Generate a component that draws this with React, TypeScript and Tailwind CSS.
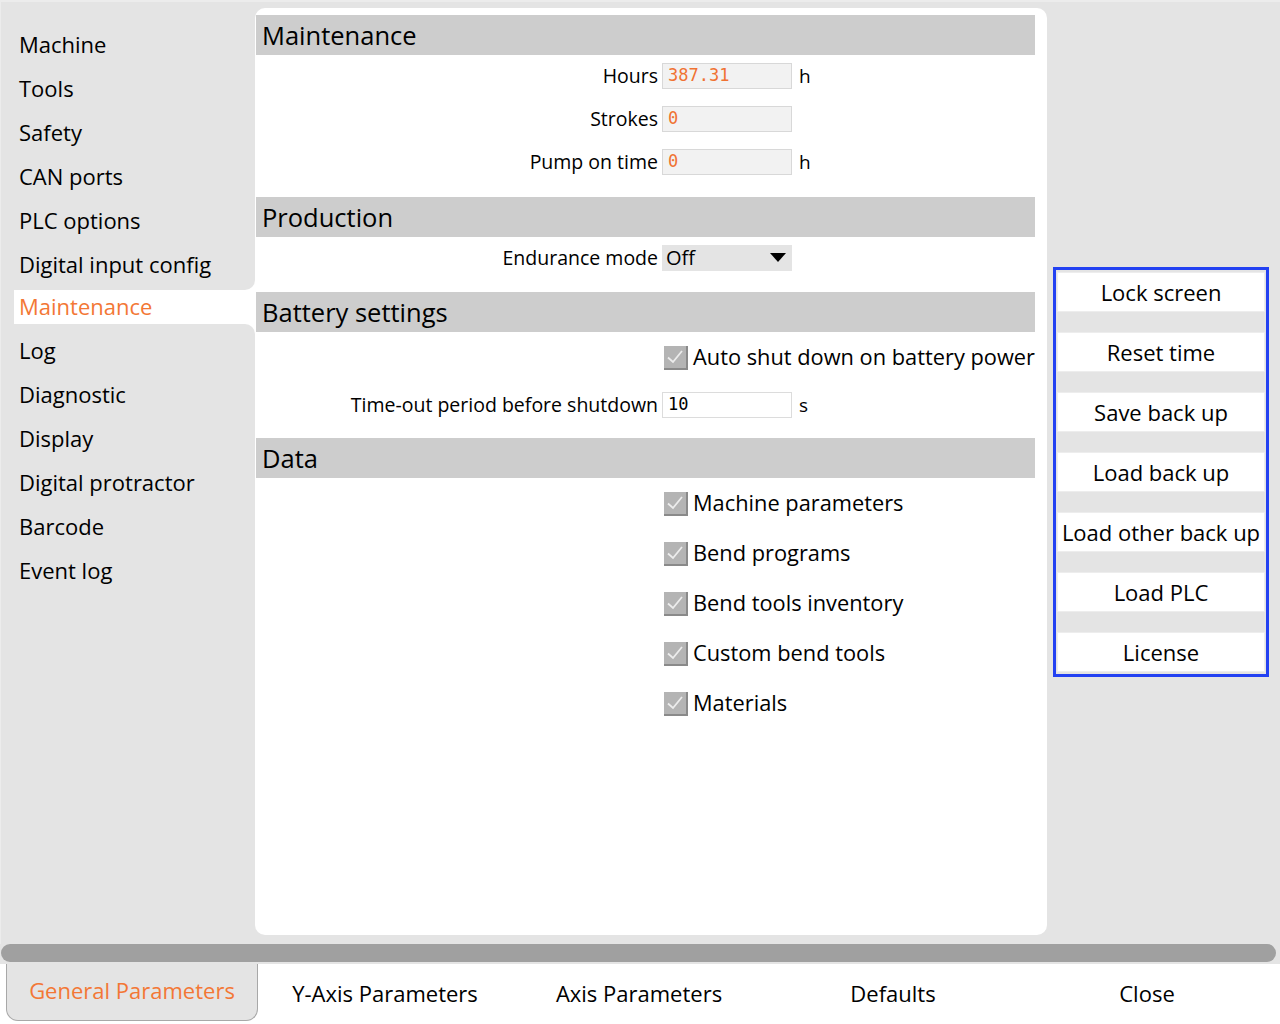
import React from 'react';

const FONT = "font-['Open_Sans',_sans-serif]";

const NAV_TOP = ['Machine', 'Tools', 'Safety', 'CAN ports', 'PLC options', 'Digital input config'];
const NAV_BOTTOM = ['Log', 'Diagnostic', 'Display', 'Digital protractor', 'Barcode', 'Event log'];
const ACTIONS = ['Lock screen', 'Reset time', 'Save back up', 'Load back up', 'Load other back up', 'Load PLC', 'License'];
const TABS = ['General Parameters', 'Y-Axis Parameters', 'Axis Parameters', 'Defaults', 'Close'];
const DATA_ITEMS = ['Machine parameters', 'Bend programs', 'Bend tools inventory', 'Custom bend tools', 'Materials'];

function SectionHeader({ title }: { title: string }) {
  return (
    <div className="ml-[1px] mr-[12px] h-[40px] bg-[#cdcdcd] pl-[6px] flex items-center text-[25.5px] text-black">
      {title}
    </div>
  );
}

function FieldRow({ label, value, unit, plain }: { label: string; value: string; unit?: string; plain?: boolean }) {
  return (
    <div className="flex items-center h-[26px]">
      <div className="w-[403px] text-right text-[19.5px] text-black leading-none whitespace-nowrap">{label}</div>
      <div
        className={`ml-[4px] w-[130px] h-[26px] border flex items-center pl-[5px] font-['DejaVu_Sans_Mono',_monospace] text-[17px] ${
          plain ? 'bg-white border-[#dcdcdc] text-black' : 'bg-[#f2f2f2] border-[#d8d8d8] text-[#f07232]'
        }`}
      >
        {value}
      </div>
      {unit && <div className="ml-[7px] text-[19px] text-black leading-none">{unit}</div>}
    </div>
  );
}

function Check({ label }: { label: string }) {
  return (
    <div className="flex items-center h-[24px]">
      <div className="w-[403px]" />
      <div className="ml-[6px] w-[24px] h-[24px] bg-[#b4b4b4] border-r-2 border-b-2 border-[#8a8a8a] flex items-center justify-center">
        <svg width="18" height="16" viewBox="0 0 18 16">
          <path d="M2 8.5 L7 13 L16 2" fill="none" stroke="#ececec" strokeWidth="1.8" />
        </svg>
      </div>
      <div className="ml-[5px] mb-[3px] text-[21.8px] text-black whitespace-nowrap leading-none">{label}</div>
    </div>
  );
}

export default function App() {
  return (
    <div className={`w-[1280px] h-[1024px] flex flex-col bg-[#e4e4e4] overflow-hidden ${FONT}`}>
      <div className="h-[944px] flex border-t-2 border-l border-[#ececec]">
        {/* sidebar */}
        <div className="w-[254px] flex flex-col bg-white">
          <div className="bg-[#e4e4e4] rounded-br-[10px] pt-[20px] pb-[4px]">
            {NAV_TOP.map((n) => (
              <div key={n} className="h-[44px] flex items-center pl-[18px] text-[22px] text-black whitespace-nowrap">
                {n}
              </div>
            ))}
          </div>
          <div className="h-[34px] flex">
            <div className="w-[13px] bg-[#e4e4e4]" />
            <div className="flex-1 bg-white flex items-center pl-[5px] pb-[1px] text-[22px] text-[#f37735]">Maintenance</div>
          </div>
          <div className="flex-1 bg-[#e4e4e4] rounded-tr-[10px] pt-[4px]">
            {NAV_BOTTOM.map((n) => (
              <div key={n} className="h-[44px] flex items-center pl-[18px] text-[22px] text-black whitespace-nowrap">
                {n}
              </div>
            ))}
          </div>
        </div>

        {/* content panel */}
        <div className="w-[792px] mt-[6px] mb-[9px] bg-white rounded-[10px] pt-[7px]">
          <SectionHeader title="Maintenance" />
          <div className="pt-[8px] pb-[22px] flex flex-col gap-[17px]">
            <FieldRow label="Hours" value="387.31" unit="h" />
            <FieldRow label="Strokes" value="0" />
            <FieldRow label="Pump on time" value="0" unit="h" />
          </div>

          <SectionHeader title="Production" />
          <div className="pt-[8px] pb-[21px]">
            <div className="flex items-center h-[26px]">
              <div className="w-[403px] text-right text-[19.5px] text-black leading-none">Endurance mode</div>
              <div className="ml-[4px] w-[130px] h-[26px] bg-[#e4e4e4] flex items-center justify-between pl-[4px] pr-[6px] text-[20px] text-black">
                <span>Off</span>
                <svg width="16" height="10" viewBox="0 0 16 10">
                  <path d="M0 0 H16 L8 9 Z" fill="#000" />
                </svg>
              </div>
            </div>
          </div>

          <SectionHeader title="Battery settings" />
          <div className="pt-[14px] pb-[20px] flex flex-col gap-[22px]">
            <Check label="Auto shut down on battery power" />
            <FieldRow label="Time-out period before shutdown" value="10" unit="s" plain />
          </div>

          <SectionHeader title="Data" />
          <div className="pt-[14px] flex flex-col gap-[26px]">
            {DATA_ITEMS.map((d) => (
              <Check key={d} label={d} />
            ))}
          </div>
        </div>

        {/* right actions */}
        <div className="flex-1 pl-[6px] pt-[265px]">
          <div className="w-[216px] border-[3px] border-[#2341f2] bg-[#e4e4e4] px-[1px] py-[2px] flex flex-col gap-[20px]">
            {ACTIONS.map((a) => (
              <div
                key={a}
                className="h-[40px] bg-white border border-[#ededed] flex items-center justify-center text-[22px] text-black whitespace-nowrap"
              >
                {a}
              </div>
            ))}
          </div>
        </div>
      </div>

      {/* scrollbar */}
      <div className="h-[20px] pl-[1px] pr-[4px] pb-[2px]">
        <div className="h-[18px] rounded-full bg-[#a0a0a0]" />
      </div>

      {/* bottom tabs */}
      <div className="flex-1 bg-white flex pl-[4px]">
        {TABS.map((t, i) =>
          i === 0 ? (
            <div key={t} className="w-[254px] pl-[2px] pb-[3px]">
              <div className="h-full bg-[#e4e4e4] border border-t-0 border-[#a8a8a8] rounded-b-[12px] flex items-center justify-center pb-[3px] text-[22px] text-[#f37735] whitespace-nowrap">
                {t}
              </div>
            </div>
          ) : (
            <div key={t} className="w-[254px] flex items-center justify-center pb-[2px] text-[22px] text-black whitespace-nowrap">
              {t}
            </div>
          )
        )}
      </div>
    </div>
  );
}
